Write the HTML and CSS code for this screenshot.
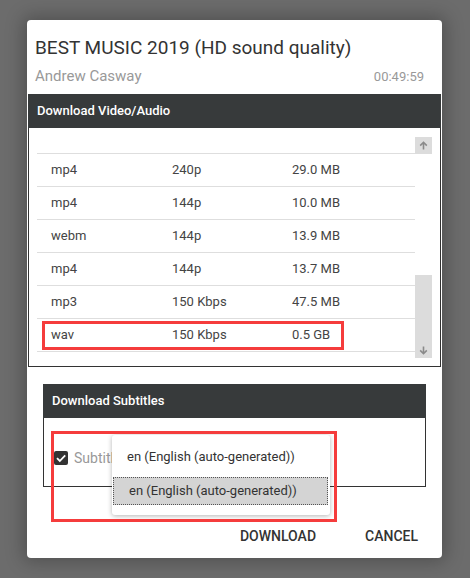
FILE: index.html
```html
<!DOCTYPE html>
<html lang="en">
<head>
<meta charset="utf-8">
<title>Download</title>
<link rel="stylesheet" href="styles.css">
</head>
<body>
<div class="dialog">
  <div class="head">
    <h1 class="title">BEST MUSIC 2019 (HD sound quality)</h1>
    <div class="meta"><span class="author">Andrew Casway</span><span class="time">00:49:59</span></div>
  </div>

  <section class="panel">
    <div class="panel-header">Download Video/Audio</div>
    <div class="panel-body media-body">
      <div class="list">
        <div class="list-top"></div>
        <div class="row"><span>mp4</span><span>240p</span><span>29.0 MB</span></div>
        <div class="row"><span>mp4</span><span>144p</span><span>10.0 MB</span></div>
        <div class="row"><span>webm</span><span>144p</span><span>13.9 MB</span></div>
        <div class="row"><span>mp4</span><span>144p</span><span>13.7 MB</span></div>
        <div class="row"><span>mp3</span><span>150 Kbps</span><span>47.5 MB</span></div>
        <div class="row row-marked"><span>wav</span><span>150 Kbps</span><span>0.5 GB</span><i class="mark mark-row"></i></div>
      </div>
      <div class="scrollbar">
        <div class="sb-btn">
          <svg width="9" height="9" viewBox="0 0 9 9"><path d="M4.5 8.5V1.5M1.2 4.6L4.5 1.3L7.8 4.6" fill="none" stroke="#8a8a8a" stroke-width="1.6"/></svg>
        </div>
        <div class="sb-thumb">
          <svg width="9" height="9" viewBox="0 0 9 9"><path d="M4.5 0.5V7.5M1.2 4.4L4.5 7.7L7.8 4.4" fill="none" stroke="#8a8a8a" stroke-width="1.6"/></svg>
        </div>
      </div>
    </div>
  </section>

  <section class="panel panel-subs">
    <div class="panel-header">Download Subtitles</div>
    <div class="panel-body subs-body">
      <label class="check">
        <span class="box"><svg width="14" height="14" viewBox="0 0 14 14"><path d="M3 7.2L5.8 10L11.2 4.4" fill="none" stroke="#fff" stroke-width="1.8"/></svg></span>
        <span class="check-label">Subtitles</span>
      </label>
      <div class="dropdown">
        <div class="option">en (English (auto-generated))</div>
        <div class="option option-active">en (English (auto-generated))</div>
      </div>
      <i class="mark mark-subs"></i>
    </div>
  </section>

  <div class="actions">
    <button class="btn">DOWNLOAD</button>
    <button class="btn">CANCEL</button>
  </div>
</div>
</body>
</html>
```

FILE: styles.css
```css
html, body {
  margin: 0;
  padding: 0;
}
body {
  background: #6c6c6c;
  font-family: Roboto, "Liberation Sans", Arial, sans-serif;
  color: #333;
  padding: 20px 0 0 27px;
  height: 578px;
  box-sizing: border-box;
  overflow: hidden;
}
.dialog {
  width: 415px;
  height: 538px;
  background: #fff;
  border-radius: 4px;
  box-shadow: 0 0 18px 4px rgba(0, 0, 0, 0.25);
  box-sizing: border-box;
}
.head {
  padding: 14px 18px 0 8px;
}
.title {
  margin: 0;
  font-size: 19px;
  line-height: 27px;
  font-weight: 400;
  color: #333;
}
.meta {
  margin-top: 5px;
  margin-bottom: 7px;
  display: flex;
  justify-content: space-between;
  align-items: baseline;
  line-height: 20px;
  color: #999;
}
.author {
  font-size: 15px;
}
.time {
  font-size: 13px;
}
.panel {
  margin: 0 1px;
}
.panel-header {
  height: 34px;
  background: #373a3b;
  color: #fff;
  font-size: 13px;
  font-weight: 500;
  line-height: 34px;
  padding-left: 9px;
}
.panel-body {
  border: 1px solid #333;
  border-top: none;
}
.media-body {
  display: flex;
}
.list {
  flex: 1;
  padding: 0 0 14px 8px;
}
.list-top {
  height: 25px;
  border-bottom: 1px solid #dedede;
}
.row {
  position: relative;
  display: grid;
  grid-template-columns: 121px 120px 1fr;
  padding-left: 14px;
  height: 32px;
  line-height: 32px;
  font-size: 13px;
  color: #444;
  border-bottom: 1px solid #dedede;
}
.mark {
  position: absolute;
  border: 3px solid #f53c3c;
  box-sizing: border-box;
  display: block;
}
.mark-row {
  left: 5px;
  top: 2px;
  width: 302px;
  height: 29px;
}
.scrollbar {
  width: 17px;
  margin-right: 8px;
  padding: 9px 0 8px;
  display: flex;
  flex-direction: column;
}
.sb-btn {
  height: 17px;
  background: #dcdcdc;
  display: flex;
  align-items: center;
  justify-content: center;
}
.sb-thumb {
  margin-top: auto;
  height: 83px;
  background: #dcdcdc;
  display: flex;
  align-items: flex-end;
  justify-content: center;
  padding-bottom: 3px;
  box-sizing: border-box;
}
.panel-subs {
  margin: 17px 16px 0;
}
.subs-body {
  position: relative;
  height: 68px;
  box-sizing: content-box;
}
.check {
  display: flex;
  align-items: center;
  padding: 32px 0 0 10px;
  gap: 6px;
}
.box {
  width: 14px;
  height: 14px;
  background: #333;
  border-radius: 2px;
  display: block;
}
.box svg {
  display: block;
}
.check-label {
  font-size: 14px;
  color: #999;
  line-height: 16px;
}
.dropdown {
  position: absolute;
  left: 68px;
  top: 17px;
  width: 218px;
  height: 80px;
  box-sizing: border-box;
  background: #fff;
  border-radius: 3px;
  box-shadow: 0 1px 5px rgba(0, 0, 0, 0.3);
  padding: 8px 2px 0 1px;
  font-size: 13px;
  color: #333;
}
.option {
  height: 28px;
  line-height: 28px;
  padding-left: 14px;
}
.option-active {
  margin-top: 6px;
  background: #d4d4d4;
  border: 1px dotted #555;
  line-height: 26px;
  box-sizing: border-box;
  padding-left: 15px;
}
.mark-subs {
  left: 7px;
  top: 13px;
  width: 286px;
  height: 91px;
}
.actions {
  display: flex;
  justify-content: flex-end;
  gap: 49px;
  padding-right: 24px;
  margin-top: 39px;
}
.btn {
  background: none;
  border: none;
  padding: 0;
  font-family: Roboto, "Liberation Sans", Arial, sans-serif;
  font-size: 14px;
  font-weight: 500;
  line-height: 20px;
  color: #333;
}
```
